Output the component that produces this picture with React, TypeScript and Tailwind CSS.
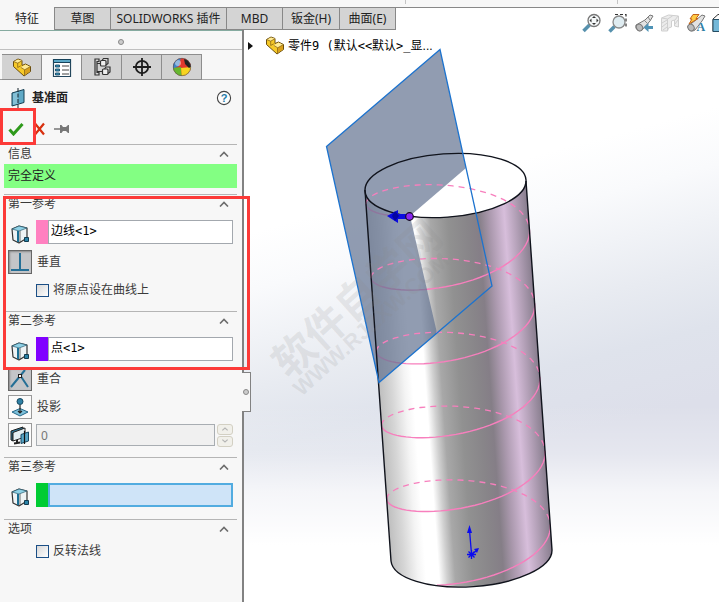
import { useState } from "react";
import type { ReactNode } from "react";

const TABS = [
  { label: "特征", width: "w-[55px]" },
  { label: "草图", width: "w-[56px]" },
  { label: "SOLIDWORKS 插件", width: "w-[116px]" },
  { label: "MBD", width: "w-[56px]" },
  { label: "钣金(H)", width: "w-[57px]" },
  { label: "曲面(E)", width: "w-[56px]" },
];

function PartIcon() {
  return (
    <svg viewBox="0 0 20 20" className="size-5" strokeLinejoin="round" aria-hidden="true">
      <path d="M1.500 4.500L6 2l4 1.500v5L13.500 7l5 2.500v5L12 19 1.500 9.500z" fill="#f6c927" stroke="#6b4e10" strokeWidth="1" />
      <path d="M2 4.500L6 2.500l4 1.200-4.500 2.300zM8.500 10.500l5-3 4.500 2.200-5 3z" fill="#ffeb96" />
      <path d="M12.500 13l5.500-3v4.500L12.500 18z" fill="#d9a01a" />
      <path d="M2 4.700l3.700 1.500 4-2.300M5.700 6.200v4.300l3-1.700M8.700 10.300l4 2.500 5.300-3M12.500 12.800v5.700" fill="none" stroke="#8c6718" strokeWidth=".8" />
    </svg>
  );
}

function ListIcon() {
  return (
    <svg viewBox="0 0 20 20" className="size-5" aria-hidden="true">
      <path d="M1.500 1.500h17v17h-17z" fill="#fff" stroke="#23465c" strokeWidth="1.200" />
      <path d="M1.500 1.500h17v3h-17z" fill="#5aa7c6" stroke="#17425a" />
      <path d="M3.500 7h4v2h-4zM3.500 11h4v2h-4zM3.500 15h4v2h-4z" fill="#3b96bd" stroke="#164a66" strokeWidth=".9" />
      <path d="M10 8h7M10 12h7M10 16h7" stroke="#444" strokeWidth="1.200" />
    </svg>
  );
}

function ConfigIcon() {
  return (
    <svg viewBox="0 0 20 20" className="size-5" fill="none" stroke="#333" strokeWidth="1.200" aria-hidden="true">
      <path d="M3 2h4v2.500H5v11h2V18H3zM5 6.500h4M5 14.500h6" />
      <rect x="8.500" y="3.500" width="5.500" height="5.500" rx="1" fill="#eee" />
      <rect x="10.500" y="12" width="5.500" height="5.500" rx="1" fill="#eee" />
      <path d="M10 3.500l1.500-2H16v5L14 8M12.500 12l1.500-2h4v5l-2 1.500" />
    </svg>
  );
}

function TargetIcon() {
  return (
    <svg viewBox="0 0 20 20" className="size-5" fill="none" stroke="#1d1d1d" strokeWidth="1.800" aria-hidden="true">
      <circle cx="10" cy="10" r="6.200" />
      <path d="M10 1v18M1 10h18" />
    </svg>
  );
}

function BallIcon() {
  return (
    <svg viewBox="0 0 20 20" className="size-5" aria-hidden="true">
      <defs>
        <clipPath id="ball"><circle cx="10" cy="10" r="9" /></clipPath>
      </defs>
      <g clipPath="url(#ball)">
        <path d="M0 0h20v20H0z" fill="#e0382d" />
        <path d="M0 0h9L7 9l-6 3z" fill="#3d82c9" />
        <path d="M0 11l9-1 1 10H0z" fill="#66b72f" />
        <path d="M9 11l11-1v11H10z" fill="#f7d41f" />
        <path d="M12 2l4 1 4 6-3 2-4-4z" fill="#222" />
        <circle cx="6" cy="6" r="3" fill="#fff" opacity=".45" />
      </g>
      <circle cx="10" cy="10" r="8.700" fill="none" stroke="#555" strokeWidth=".6" />
    </svg>
  );
}

function PlaneIcon() {
  return (
    <svg viewBox="0 0 14 20" className="h-5 w-3.5" aria-hidden="true">
      <path d="M1 5l12-3.500v13L1 18z" fill="#5fa9c6" stroke="#153e52" />
      <path d="M2 5.700L7 4v11.500l-5 1.300z" fill="#84c0d6" />
      <path d="M7 0v20" stroke="#16242c" strokeDasharray="4 1.500" />
    </svg>
  );
}

function BoxIcon() {
  return (
    <svg viewBox="0 0 20 20" className="mx-0.5 size-5 shrink-0" strokeLinejoin="round" aria-hidden="true">
      <path d="M2 5l7-3 8 2v10l-8 5-6-3z" fill="#eef3f5" stroke="#333" strokeWidth="1.200" />
      <path d="M2 5l7-3 8 2-8 3z" fill="#8ed1e6" stroke="#2b5c70" strokeWidth=".7" />
      <path d="M8 7v11" stroke="#1b6f94" strokeWidth="2" />
      <path d="M10 7v11" stroke="#333" strokeWidth=".7" />
      <rect x="14.500" y="13.500" width="4" height="4" fill="#2b83a8" stroke="#123c50" />
    </svg>
  );
}

function Chevron() {
  return (
    <svg viewBox="0 0 10 6" className="h-1.5 w-2.5" fill="none" stroke="#6c6c6c" strokeWidth="1.600" aria-hidden="true">
      <path d="M1 5.500l4-4 4 4" />
    </svg>
  );
}

function Section({ title, children, className }: { title: string; children: ReactNode; className: string }) {
  const [open, setOpen] = useState(true);
  return (
    <section className={`ml-1 mr-[5px] border-t border-[#b5b5b5] ${className}`}>
      <button
        type="button"
        aria-expanded={open}
        onClick={() => setOpen(!open)}
        className="flex h-[18px] w-full items-center justify-between pl-1 pr-2 text-left"
      >
        <span>{title}</span>
        <Chevron />
      </button>
      {open && children}
    </section>
  );
}

function Selection({ label, value, swatch, active }: { label: string; value: string; swatch: string; active?: boolean }) {
  return (
    <label className="mr-1 mt-[7px] flex h-6 pl-1">
      <span className="flex w-7 items-end"><BoxIcon /></span>
      <span className={`w-3 shrink-0 ${swatch}`} />
      <input
        aria-label={label}
        defaultValue={value}
        className={`min-w-0 flex-1 px-0.5 pb-0.5 font-['DejaVu_Sans_Mono','Noto_Sans_CJK_SC',sans-serif] text-xs text-black outline-none ${
          active ? "border-2 border-[#52ace0] bg-[#cfe4f8]" : "border border-[#a3a8ae] bg-white"
        }`}
      />
    </label>
  );
}

function Relation({ label, pressed, children }: { label: string; pressed?: boolean; children: ReactNode }) {
  return (
    <div className="flex h-6 items-center gap-[5px] pl-1">
      <button
        type="button"
        aria-label={label}
        aria-pressed={!!pressed}
        className={`flex size-6 shrink-0 items-center justify-center border ${
          pressed ? "border-[#666] bg-[#c4c5c8] shadow-[inset_1px_1px_2px_#888]" : "border-[#9a9a9a] bg-[#fbfbfb]"
        }`}
      >
        {children}
      </button>
      <span>{label}</span>
    </div>
  );
}

function Check({ label }: { label: string }) {
  return (
    <label className="flex h-[26px] items-center gap-1 pl-8">
      <input
        type="checkbox"
        className="size-[13px] appearance-none border border-[#1b4f86] bg-linear-to-br from-[#d8d8d8] to-white checked:bg-[#1b4f86]"
      />
      {label}
    </label>
  );
}

const rad = Math.PI / 180;

/* Point of the helix at an angle in degrees; it starts on the top rim and drops 74px a turn. */
function helixPoint(deg: number) {
  const tilt = -4 * rad;
  const turns = (deg - 117) / 360;
  const x = 80.7 * Math.cos(deg * rad);
  const y = 31.7 * Math.sin(deg * rad);
  const px = 445.5 + x * Math.cos(tilt) - y * Math.sin(tilt) + turns * 5.2;
  const py = 185.5 + x * Math.sin(tilt) + y * Math.cos(tilt) + turns * 73.8;
  return `${px.toFixed(1)} ${py.toFixed(1)}`;
}

function helixArc(from: number, to: number) {
  const points: string[] = [];
  for (let a = from; a <= to; a += 5) points.push(helixPoint(a));
  points.push(helixPoint(to));
  return "M" + points.join("L");
}

const BACK = [180, 540, 900, 1260, 1620].map((a) => helixArc(a, a + 180)).join("");
const FRONT =
  helixArc(117, 180) + [360, 720, 1080, 1440].map((a) => helixArc(a, a + 180)).join("") + helixArc(1800, 1917);

function Model() {
  return (
    <svg
      viewBox="244 30 475 572"
      preserveAspectRatio="xMinYMin slice"
      className="absolute inset-0 size-full"
      role="img"
      aria-label="零件9"
    >
      <defs>
        <linearGradient id="sky" gradientUnits="userSpaceOnUse" x1="500" y1="165" x2="573" y2="435">
          <stop offset="0" stopColor="#fff" />
          <stop offset=".2" stopColor="#f9fafc" />
          <stop offset=".54" stopColor="#e8ebf1" />
          <stop offset=".75" stopColor="#dfe3ec" />
          <stop offset="1" stopColor="#dddfea" />
        </linearGradient>
        <linearGradient id="floor" gradientUnits="userSpaceOnUse" x1="0" y1="405" x2="0" y2="545">
          <stop offset="0" stopColor="#fff" stopOpacity="0" />
          <stop offset=".35" stopColor="#fff" stopOpacity=".25" />
          <stop offset=".62" stopColor="#fff" stopOpacity=".7" />
          <stop offset="1" stopColor="#fff" />
        </linearGradient>
        <linearGradient id="metal" gradientUnits="userSpaceOnUse" x1="365" y1="190" x2="526" y2="178.700">
          <stop offset="0" stopColor="#bebebe" />
          <stop offset=".08" stopColor="#d6d6d6" />
          <stop offset=".16" stopColor="#f4f4f4" />
          <stop offset=".21" stopColor="#fff" />
          <stop offset=".29" stopColor="#fff" />
          <stop offset=".34" stopColor="#d0d0d0" />
          <stop offset=".39" stopColor="#a8a8a8" />
          <stop offset=".5" stopColor="#919191" />
          <stop offset=".62" stopColor="#888589" />
          <stop offset=".69" stopColor="#857e87" />
          <stop offset=".76" stopColor="#ab99ae" />
          <stop offset=".85" stopColor="#d7bedb" />
          <stop offset=".92" stopColor="#b3a0b7" />
          <stop offset="1" stopColor="#877d8d" />
        </linearGradient>
      </defs>
      <path d="M243 30h1200v1200H243z" fill="url(#sky)" />
      <path d="M243 400h1200v830H243z" fill="url(#floor)" />

      <path d="M365 190L391 561A80.700 31.700 -4 0 0 552 550L526 181z" fill="url(#metal)" />
      <ellipse cx="445.500" cy="185.500" rx="80.700" ry="31.700" transform="rotate(-4 445.500 185.500)" fill="#fff" />
      <path d={FRONT} fill="none" stroke="#f77fbd" strokeWidth="1.400" />

      <path d="M440 49.500L466 168L410 216L437 333L379 382.500L326.500 146.500z" fill="#627290" fillOpacity=".7" />
      <path d={BACK} fill="none" stroke="#f77fbd" strokeWidth="1.300" strokeDasharray="6 5" />
      <g fill="none" stroke="#10131c" strokeWidth="1.400">
        <ellipse cx="445.500" cy="185.500" rx="80.700" ry="31.700" transform="rotate(-4 445.500 185.500)" />
        <path d="M365 190L391 561A80.700 31.700 -4 0 0 552 550L526 181" />
      </g>
      <path d="M440 49.500L326.500 146.500L379 382.500L492 286z" fill="none" stroke="#1c73cf" strokeWidth="1.300" />

      <path d="M387 216l11-6v4h9v5h-9v4z" fill="#0a0ae0" />
      <path d="M395 211l4 5-4 5-3-5z" fill="#0505a0" />
      <circle cx="409.500" cy="216.500" r="3.800" fill="#8a25f0" stroke="#150820" strokeWidth="1.200" />

      <g stroke="#0b0bf0" strokeWidth="1.300">
        <path d="M471.500 554L469.500 530M471 555l5-4M467 554.500h9M471.500 550v9M468.500 551.500l6 6M474.500 551.500l-6 6" />
        <path d="M469.500 525l2.500 8h-5zM479 548l-2 5-3-4z" fill="#0b0bf0" stroke="none" />
      </g>

      <g transform="translate(289 380) rotate(-42)" fill="#8c8c8c" fillOpacity=".17" className="font-['Noto_Sans_CJK_SC',sans-serif] font-bold">
        <text x="0" y="0" fontSize="42">软件自学网</text>
        <text x="-2" y="21" fontSize="22" className="font-['Liberation_Sans',sans-serif]">WWW.RJZXW.COM</text>
      </g>
    </svg>
  );
}

function ViewToolbar() {
  const cls = "size-5 shrink-0";
  return (
    <div className="absolute -top-[17px] right-0 flex w-[137px] gap-1.5 overflow-hidden">
      <button type="button" aria-label="整屏显示全图" className="shrink-0">
        <svg viewBox="0 0 20 20" className={cls}>
          <path d="M1.500 18l6-6" stroke="#5791ad" strokeWidth="3.500" />
          <circle cx="12" cy="7.500" r="6" fill="#f5f8f9" stroke="#777" strokeWidth="1.300" />
          <path d="M12 3l2 2h-4zM12 12l2-2h-4zM7.500 7.500l2-2v4zM16.500 7.500l-2-2v4z" fill="#333" />
        </svg>
      </button>
      <button type="button" aria-label="局部放大" className="shrink-0">
        <svg viewBox="0 0 20 20" className={cls}>
          <path d="M1.500 18.500l5-5" stroke="#5791ad" strokeWidth="3.500" />
          <path d="M7 1.500h11V13h-4" fill="none" stroke="#333" strokeWidth="1.200" strokeDasharray="3 2" />
          <circle cx="11" cy="9" r="6" fill="#dfecf1" stroke="#888" strokeWidth="1.300" />
        </svg>
      </button>
      <button type="button" aria-label="上一视图" className="shrink-0">
        <svg viewBox="0 0 20 20" className={cls}>
          <path d="M2 12l9-5 5-5 3 1-3 5-8 9c-3 2-7 0-6-5z" fill="#e2e2e2" stroke="#777" />
          <ellipse cx="5.500" cy="14.500" rx="3" ry="3.500" fill="#bbb" stroke="#777" transform="rotate(-35 5.500 14.500)" />
          <path d="M10 7l3 3M14 4l2 3" stroke="#888" />
          <path d="M9.500 14.500l5-4.500v3H19v3h-4.500v3z" fill="#4f93b6" />
        </svg>
      </button>
      <button type="button" aria-label="剖面视图" className="shrink-0">
        <svg viewBox="0 0 20 20" className={cls} fill="#ececec" stroke="#cfcfcf">
          <path d="M1.500 5l7-3 10 1v11l-4-1V7l-3 1v6l-3 1-1 3H1.500z" />
          <path d="M1.500 5l6 1v12M7.500 6l5-3M2 10l5-3M2 14l5-4M3 17l4-3M15 7l3-4M15 11l3-4" />
        </svg>
      </button>
      <button type="button" aria-label="动态注解视图" className="shrink-0">
        <svg viewBox="0 0 20 20" className={cls}>
          <path d="M2 13l8-6 6-5 3 1-3 5-7 9c-3 2-7 1-7-4z" fill="#e2e2e2" stroke="#777" />
          <ellipse cx="5" cy="14.500" rx="3" ry="3.500" fill="#bbb" stroke="#777" transform="rotate(-35 5 14.500)" />
          <path d="M7 1.500h6l-3 4h2l-9 5.500 3-5H4z" fill="#ffcb45" stroke="#c2621a" />
          <text x="10.500" y="18" fontSize="12" fill="#2f7ea5" className="font-['Liberation_Serif',serif] font-bold leading-none">A</text>
        </svg>
      </button>
      <button type="button" aria-label="视图定向" className="shrink-0">
        <svg viewBox="0 0 20 20" className={cls}>
          <path d="M1 6l5-4.500h13v13l-4 4H1z" fill="#fff" stroke="#333" />
          <path d="M1 6.500h14v12H1z" fill="#74b8d8" stroke="#254d63" />
        </svg>
      </button>
    </div>
  );
}

function PropertyPanel() {
  const managers = [
    { label: "设计树", icon: <PartIcon /> },
    { label: "属性", icon: <ListIcon /> },
    { label: "配置", icon: <ConfigIcon /> },
    { label: "尺寸专家", icon: <TargetIcon /> },
    { label: "外观", icon: <BallIcon /> },
  ];
  return (
    <aside className="relative z-10 w-[244px] shrink-0 border-r-2 border-[#828282] bg-[#f7f7f7] text-[#3a3a3a]">
      <div className="flex h-5 items-center justify-center border-b border-t border-b-[#c0c0c0] border-t-[#86aba0]">
        <span className="mt-1 size-1.5 rounded-full border border-[#888] bg-[#ccc]" />
      </div>
      <div className="flex h-[30px] items-end">
        <span className="w-0.5 self-end border-b border-[#999]" />
        {managers.map((m, i) => (
          <button
            key={m.label}
            type="button"
            aria-label={m.label}
            className={`flex h-[26px] w-10 items-center justify-center border-r border-t border-[#8d8d8d] ${
              i === 1 ? "bg-[#f7f7f7]" : "border-b bg-[#d2d2d2]"
            }`}
          >
            {m.icon}
          </button>
        ))}
        <span className="flex-1 border-b border-[#aaa]" />
      </div>

      <header className="flex h-[35px] items-center pl-[11px] pr-2.5">
        <PlaneIcon />
        <h1 className="ml-[7px] flex-1 text-xs font-bold text-[#222]">基准面</h1>
        <button type="button" aria-label="帮助">
          <svg viewBox="0 0 16 16" className="size-4">
            <circle cx="8" cy="8" r="6.600" fill="#fdfdfd" stroke="#444" strokeWidth="1.100" />
            <text x="8" y="12" textAnchor="middle" fontSize="11" fill="#1f7ba8" className="font-['Liberation_Sans',sans-serif] font-bold">?</text>
          </svg>
        </button>
      </header>

      <div className="mb-px flex h-7 items-center gap-2 pl-2">
        <button type="button" aria-label="确定">
          <svg viewBox="0 0 16 14" className="h-3.5 w-4">
            <path d="M1.500 7.500l4 4.500L14.500 2" fill="none" stroke="#2f9a1c" strokeWidth="3" />
          </svg>
        </button>
        <button type="button" aria-label="取消">
          <svg viewBox="0 0 14 14" className="size-3.5">
            <path d="M3 1.500l9 11M12 1.500l-9 11" stroke="#d8300f" strokeWidth="2.200" />
          </svg>
        </button>
        <button type="button" aria-label="保持可见">
          <svg viewBox="0 0 15 10" className="h-2.5 w-[15px]" fill="#777">
            <path d="M0 4.300h6V1h1.500l1.500 2h3l2-2h1v8h-1l-2-2H9L7.500 9H6V5.700H0z" />
          </svg>
        </button>
      </div>

      <Section title="信息" className="pb-1.5">
        <p className="mt-px h-6 bg-[#83ff83] pl-1 leading-6 text-[#222]">完全定义</p>
      </Section>

      <Section title="第一参考" className="pb-2">
        <Selection label="第一参考" value="边线<1>" swatch="bg-[#ff80c0]" />
        <div className="mt-1.5 flex flex-col gap-[3px]">
          <Relation label="垂直" pressed>
            <svg viewBox="0 0 20 20" className="size-5" stroke="#256f96" strokeWidth="2">
              <path d="M10 1v16M1 18h18" />
            </svg>
          </Relation>
          <Check label="将原点设在曲线上" />
        </div>
      </Section>

      <Section title="第二参考" className="pb-2.5">
        <Selection label="第二参考" value="点<1>" swatch="bg-[#8000ff]" />
        <div className="mt-1.5 flex flex-col gap-1">
          <Relation label="重合" pressed>
            <svg viewBox="0 0 20 20" className="size-5" stroke="#256f96" strokeWidth="2">
              <path d="M1 18L15 1M10 6l8 12" />
              <rect x="8.500" y="5.500" width="3" height="3" fill="#fff" stroke="#222" strokeWidth="1" />
            </svg>
          </Relation>
          <Relation label="投影">
            <svg viewBox="0 0 20 20" className="size-5">
              <path d="M2 15l8-3.500 8 3.500-8 4z" fill="#7cc0da" stroke="#24688a" />
              <path d="M10 8v8M8 14l2 2 2-2" stroke="#222" strokeWidth="1.200" fill="none" />
              <circle cx="10" cy="4.500" r="3" fill="#2f81a6" stroke="#15475f" />
            </svg>
          </Relation>
          <div className="flex h-6 items-center gap-1 pl-1 pr-1">
            <button type="button" aria-label="偏移距离" className="flex size-6 shrink-0 items-center justify-center border border-[#9a9a9a] bg-[#fbfbfb]">
              <svg viewBox="0 0 20 20" className="size-5">
                <path d="M1 6l12-4v3L3 8v8l-2-1z" fill="#2d7899" stroke="#1d1d1d" />
                <path d="M3 7.500L15 3v9L3 16z" fill="#e3eff3" stroke="#222" />
                <path d="M4 18.500l6-1M7 15v3" stroke="#222" strokeWidth="2" />
                <path d="M11 9.500L18.500 7v9L11 18.500z" fill="#57a5c6" stroke="#174660" />
                <path d="M14.500 6v13" stroke="#111" strokeWidth="1.200" />
              </svg>
            </button>
            <input
              aria-label="距离"
              defaultValue="0"
              disabled
              className="h-[22px] min-w-0 flex-1 border border-[#a8adb2] bg-[#f0f0f0] px-1 text-xs text-[#777]"
            />
            <span className="-ml-0.5 flex w-4 flex-col gap-px">
              {["", "rotate-180"].map((turn) => (
                <button
                  key={turn}
                  type="button"
                  disabled
                  aria-label={turn ? "减少" : "增加"}
                  className="flex h-[11px] items-center justify-center rounded-[3px] border border-[#d3d0c3] bg-[#f1f0ea]"
                >
                  <svg viewBox="0 0 10 6" className={`h-1 w-2 ${turn}`} fill="none" stroke="#b5b5b5" strokeWidth="1.800">
                    <path d="M1 5l4-3.500L9 5" />
                  </svg>
                </button>
              ))}
            </span>
          </div>
        </div>
      </Section>

      <Section title="第三参考" className="pb-3">
        <Selection label="第三参考" value="" swatch="bg-[#00cc33]" active />
      </Section>

      <Section title="选项" className="pb-4">
        <Check label="反转法线" />
      </Section>

      <button
        type="button"
        aria-label="折叠面板"
        className="absolute left-[242px] top-[342px] flex h-10 w-[9px] items-center justify-center border border-l-0 border-[#828282] bg-[#f7f7f7]"
      >
        <span className="size-1.5 rounded-full border border-[#888] bg-[#ccc]" />
      </button>
      <span className="pointer-events-none absolute left-0 top-[78px] h-[37px] w-9 border-[3px] border-[#fc3a38]" />
      <span className="pointer-events-none absolute left-[3px] top-[166px] h-[174px] w-[247px] border-[3px] border-[#fc3a38]" />
    </aside>
  );
}

export default function App() {
  const [tab, setTab] = useState(0);
  return (
    <div className="flex min-h-screen flex-col overflow-hidden bg-white font-['Noto_Sans','Noto_Sans_CJK_SC',sans-serif] text-xs leading-4">
      <div className="flex h-[7px] justify-end bg-[#f7f7f7] pr-[101px]">
        <span className="h-1 w-[213px] border-x border-[#c4c4c4]" />
      </div>
      <nav className="flex h-[23px] border-t border-[#888]">
        {TABS.map((t, i) => (
          <button
            key={t.label}
            type="button"
            onClick={() => setTab(i)}
            className={`shrink-0 whitespace-nowrap border-r border-[#888] text-[#222] ${t.width} ${
              i === tab ? "-mt-px bg-[#f7f7f7]" : "border-b bg-[#d4d4d4]"
            }`}
          >
            {t.label}
          </button>
        ))}
      </nav>
      <div className="flex flex-1">
        <PropertyPanel />
        <main className="relative min-w-0 flex-1">
          <Model />
          <div className="relative flex h-8 items-center pl-1 text-black">
            <svg viewBox="0 0 5 8" className="h-2 w-[5px]" aria-hidden="true"><path d="M0 0l5 4-5 4z" fill="#111" /></svg>
            <span className="ml-3 mr-[3px] pb-0.5"><PartIcon /></span>
            <span className="whitespace-pre font-['DejaVu_Sans_Mono','Noto_Sans_CJK_SC',sans-serif]">
              零件9 (默认&lt;&lt;默认&gt;_显<span className="font-['Liberation_Sans',sans-serif]">...</span>
            </span>
          </div>
          <ViewToolbar />
        </main>
      </div>
    </div>
  );
}
